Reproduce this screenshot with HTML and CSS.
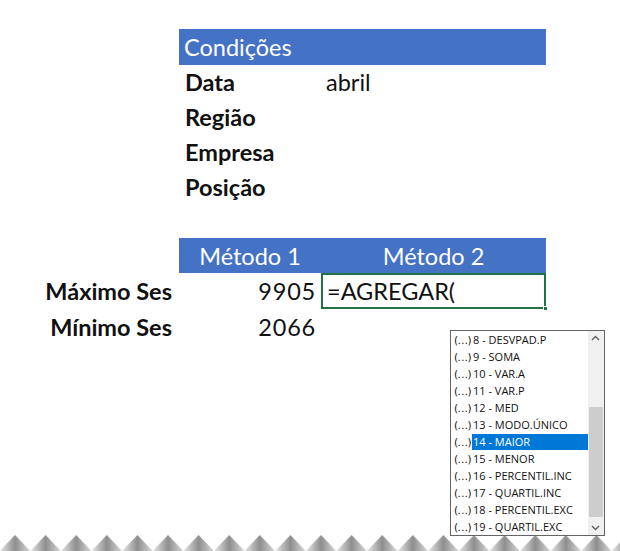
FILE: index.html
```html
<!DOCTYPE html>
<html lang="pt">
<head>
    <meta charset="UTF-8">
    <title>Condições</title>
    <link rel="stylesheet" href="styles.css">
</head>
<body>
    <div class="sheet">
        <div class="conditions">
            <div class="head">Condições</div>
            <div class="label">Data</div><div class="value">abril</div>
            <div class="label">Região</div><div class="value"></div>
            <div class="label">Empresa</div><div class="value"></div>
            <div class="label">Posição</div><div class="value"></div>
        </div>

        <div class="results">
            <div class="blank"></div>
            <div class="head center">Método 1</div>
            <div class="head center">Método 2</div>

            <div class="row-label">Máximo Ses</div>
            <div class="num">9905</div>
            <div class="editing">=AGREGAR(<span class="handle"></span></div>

            <div class="row-label">Mínimo Ses</div>
            <div class="num">2066</div>
            <div></div>
        </div>
    </div>

    <div class="dropdown">
        <ul class="options">
            <li><span class="ico">(…)</span><span class="opt">8 - DESVPAD.P</span></li>
            <li><span class="ico">(…)</span><span class="opt">9 - SOMA</span></li>
            <li><span class="ico">(…)</span><span class="opt">10 - VAR.A</span></li>
            <li><span class="ico">(…)</span><span class="opt">11 - VAR.P</span></li>
            <li><span class="ico">(…)</span><span class="opt">12 - MED</span></li>
            <li><span class="ico">(…)</span><span class="opt">13 - MODO.ÚNICO</span></li>
            <li><span class="ico">(…)</span><span class="opt selected">14 - MAIOR</span></li>
            <li><span class="ico">(…)</span><span class="opt">15 - MENOR</span></li>
            <li><span class="ico">(…)</span><span class="opt">16 - PERCENTIL.INC</span></li>
            <li><span class="ico">(…)</span><span class="opt">17 - QUARTIL.INC</span></li>
            <li><span class="ico">(…)</span><span class="opt">18 - PERCENTIL.EXC</span></li>
            <li><span class="ico">(…)</span><span class="opt">19 - QUARTIL.EXC</span></li>
        </ul>
        <div class="scrollbar">
            <svg class="arrow" width="15" height="14" viewBox="0 0 15 14"><path d="M4 9 L7.5 5.5 L11 9" fill="none" stroke="#606060" stroke-width="1.4"/></svg>
            <div class="track"><div class="thumb"></div></div>
            <svg class="arrow" width="15" height="14" viewBox="0 0 15 14"><path d="M4 5 L7.5 8.5 L11 5" fill="none" stroke="#606060" stroke-width="1.4"/></svg>
        </div>
    </div>

    <svg class="torn" width="620" height="16" viewBox="0 0 620 16" preserveAspectRatio="none">
        <defs>
            <linearGradient id="side" x1="0" y1="0" x2="1" y2="0">
                <stop offset="0" stop-color="#e6e6e6"/>
                <stop offset="0.5" stop-color="#8e8e8e"/>
                <stop offset="1" stop-color="#d8d8d8"/>
            </linearGradient>
            <pattern id="teeth" width="30.6" height="16" patternUnits="userSpaceOnUse" x="-0.3">
                <path d="M0 16 L15.3 0 L30.6 16 Z" fill="url(#side)"/>
            </pattern>
        </defs>
        <rect width="620" height="16" fill="url(#teeth)"/>
    </svg>
</body>
</html>
```

FILE: styles.css
```css
* {
    margin: 0;
    padding: 0;
    box-sizing: border-box;
}
body {
    width: 620px;
    height: 551px;
    background: #fff;
    color: #111;
    font-family: Lato, "Open Sans", sans-serif;
    display: flex;
    flex-direction: column;
    overflow: hidden;
}
.sheet {
    padding-top: 29px;
}
.conditions {
    margin-left: 179px;
    width: 367px;
    display: grid;
    grid-template-columns: 142px 225px;
    grid-auto-rows: 35px;
}
.head {
    background: #4472c4;
    color: #fff;
    font-size: 23.5px;
    padding-left: 5px;
    display: flex;
    align-items: center;
}
.conditions .head {
    grid-column: 1 / 3;
    height: 36px;
}
.label, .value, .row-label, .num, .editing {
    font-size: 23.5px;
    display: flex;
    align-items: center;
}
.label {
    font-weight: bold;
    padding-left: 6px;
}
.value {
    padding-left: 5px;
}
.results {
    margin-top: 34px;
    width: 546px;
    display: grid;
    grid-template-columns: 179px 142px 225px;
    grid-template-rows: 35px 36px 36px;
}
.head.center {
    justify-content: center;
    padding-left: 0;
}
.row-label {
    font-weight: bold;
    justify-content: flex-end;
    padding-right: 7px;
}
.num {
    justify-content: flex-end;
    padding-right: 5px;
    letter-spacing: 0.8px;
}
.editing {
    position: relative;
    border: 2px solid #217346;
    padding-left: 4px;
}
.handle {
    position: absolute;
    right: -4px;
    bottom: -4px;
    width: 5px;
    height: 5px;
    background: #217346;
    border: 1px solid #fff;
}
.dropdown {
    position: absolute;
    left: 450px;
    top: 330px;
    width: 155px;
    height: 206px;
    background: #fff;
    border: 1px solid #646464;
    display: flex;
    font-family: "Open Sans", "Noto Sans", sans-serif;
    font-size: 11px;
    color: #111;
}
.options {
    list-style: none;
    flex: 1;
}
.options li {
    height: 17px;
    display: flex;
    align-items: center;
    padding-left: 3px;
    white-space: nowrap;
}
.ico {
    width: 18px;
    font-family: "DejaVu Sans", sans-serif;
    font-size: 10.5px;
    letter-spacing: -0.5px;
}
.opt {
    flex: 1;
    height: 16px;
    line-height: 16px;
    padding-left: 1px;
}
.opt.selected {
    background: #0078d7;
    color: #fff;
}
.scrollbar {
    width: 16px;
    background: #f0f0f0;
    display: flex;
    flex-direction: column;
}
.arrow {
    flex: none;
    display: block;
}
.track {
    flex: 1;
    display: flex;
    flex-direction: column;
    justify-content: flex-end;
    padding: 0 1px 4px;
}
.thumb {
    height: 110px;
    background: #cdcdcd;
}
.torn {
    margin-top: auto;
    display: block;
}
```
